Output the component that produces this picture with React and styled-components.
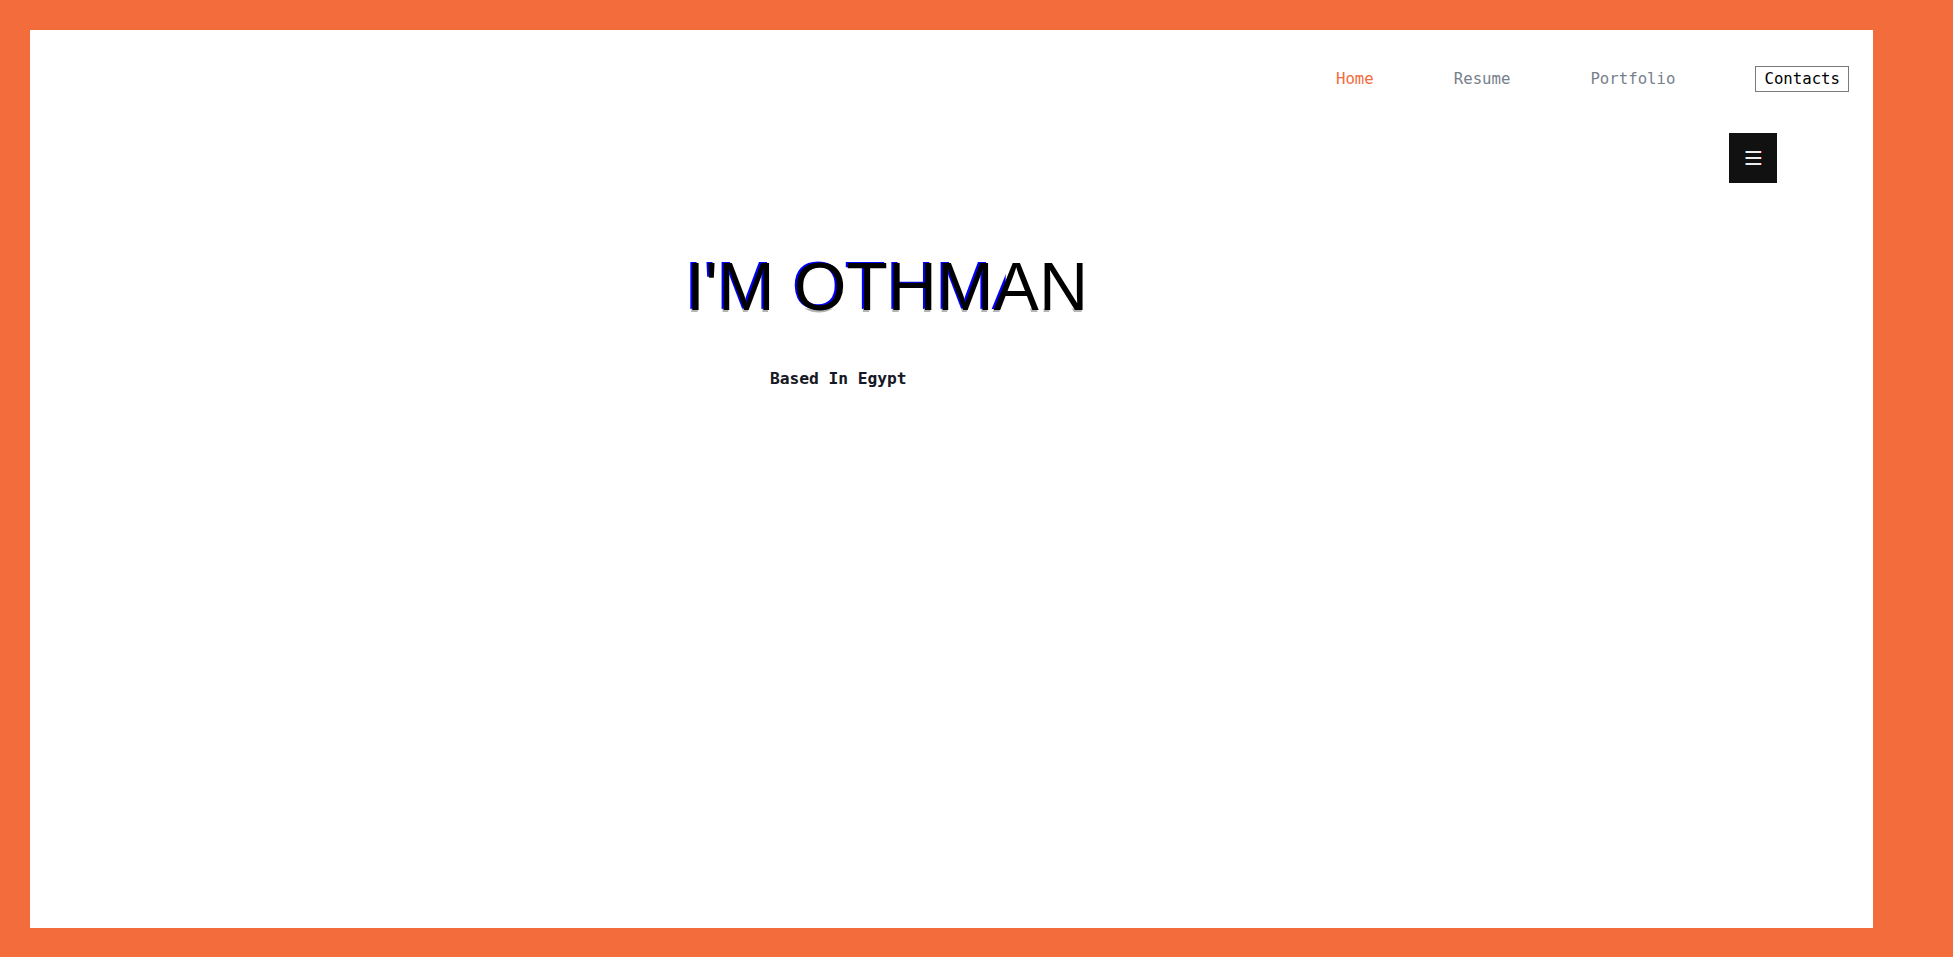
import styled, { createGlobalStyle } from 'styled-components';

const GlobalStyle = createGlobalStyle`
	html,
	body {
		margin: 0;
		padding: 0;
		background: #f36c3c;
	}

	* {
		box-sizing: border-box;
	}
`;

const Page = styled.div`
	width: 1953px;
	height: 957px;
	padding: 30px 80px 29px 30px;
	background: #f36c3c;
`;

const Panel = styled.main`
	width: 100%;
	height: 100%;
	background: #ffffff;
	display: flex;
	flex-direction: column;
`;

const Nav = styled.nav`
	display: flex;
	justify-content: flex-end;
	align-items: center;
	gap: 80px;
	padding: 36px 24px 0 0;
`;

const NavLink = styled.a`
	font-family: 'DejaVu Sans Mono', 'Liberation Mono', monospace;
	font-size: 15.7px;
	line-height: 18px;
	text-decoration: none;
	cursor: pointer;
	color: ${({ $active }) => ($active ? '#f36c3c' : '#77808b')};
	padding: ${({ $boxed }) => ($boxed ? '3px 8px' : '4px 0')};
	border: ${({ $boxed }) => ($boxed ? '1px solid #7a7a7a' : 'none')};

	${({ $boxed }) => $boxed && 'color: #000;'}
`;

const MenuRow = styled.div`
	display: flex;
	justify-content: flex-end;
	padding: 41px 96px 0 0;
`;

const MenuButton = styled.button`
	width: 48px;
	height: 50px;
	border: none;
	background: #111111;
	display: flex;
	flex-direction: column;
	justify-content: center;
	align-items: center;
	gap: 4px;
	padding: 0;
	cursor: pointer;
`;

const MenuBar = styled.span`
	display: block;
	width: 15px;
	height: 2px;
	background: #eeeeee;
	box-shadow: -1px 0 0 #2a8fd0, 1px 0 0 #c52318;
`;

const Hero = styled.section`
	display: flex;
	flex-direction: column;
	align-items: flex-start;
	padding: 69px 0 0 656px;
`;

const Title = styled.h1`
	position: relative;
	z-index: 0;
	margin: 0;
	font-family: 'Liberation Sans', Arial, sans-serif;
	font-weight: 400;
	font-size: 68px;
	line-height: 1;
	color: #000;
	white-space: nowrap;

	&::before,
	&::after {
		content: attr(data-text);
		position: absolute;
		left: 0;
		top: 0;
		z-index: -1;
	}

	&::before {
		color: #0000ff;
		transform: translate(-2px, -1px);
		clip-path: inset(0 20% 8% 0);
	}

	&::after {
		color: #b4b4b4;
		transform: translate(-1px, 2px);
		clip-path: inset(80% 0 0 0);
	}
`;

const Subtitle = styled.p`
	margin: 51px 0 0 84px;
	font-family: 'DejaVu Sans Mono', 'Liberation Mono', monospace;
	font-weight: 700;
	font-size: 16.2px;
	line-height: 1;
	color: #14192a;
	text-shadow: 0.4px 0 0 rgba(200, 140, 20, 0.35);
`;

const links = [
	{ label: 'Home', active: true },
	{ label: 'Resume' },
	{ label: 'Portfolio' },
	{ label: 'Contacts', boxed: true },
];

export default function App() {
	return (
		<>
			<GlobalStyle />
			<Page>
				<Panel>
					<Nav>
						{links.map((link) => (
							<NavLink
								key={link.label}
								$active={link.active}
								$boxed={link.boxed}
							>
								{link.label}
							</NavLink>
						))}
					</Nav>
					<MenuRow>
						<MenuButton aria-label="menu">
							<MenuBar />
							<MenuBar />
							<MenuBar />
						</MenuButton>
					</MenuRow>
					<Hero>
						<Title data-text="I'M OTHMAN">I'M OTHMAN</Title>
						<Subtitle>Based In Egypt</Subtitle>
					</Hero>
				</Panel>
			</Page>
		</>
	);
}
